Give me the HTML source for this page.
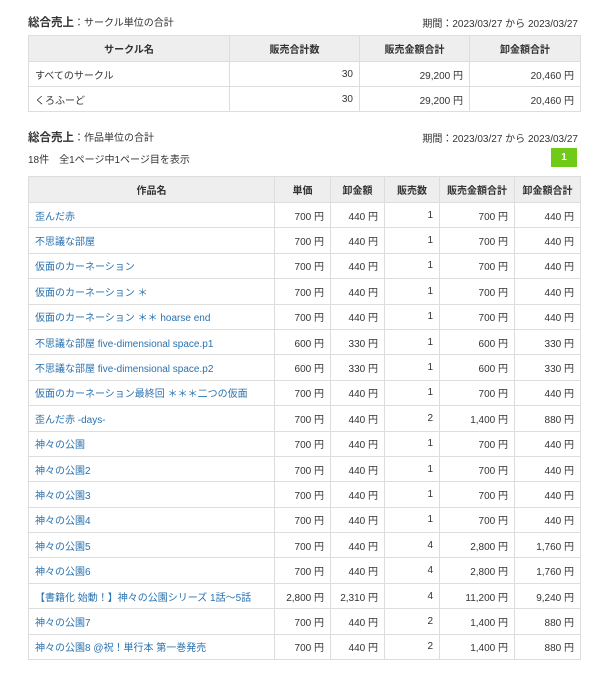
<!DOCTYPE html>
<html><head><meta charset="utf-8"><style>
body{margin:0;background:#fff;font-family:"Liberation Sans","Noto Sans CJK JP",sans-serif;font-size:10px;color:#333;}
.abs{position:absolute}
table{border-collapse:collapse;table-layout:fixed;position:absolute;left:28px;width:552px}
th,td{border:1px solid #ddd;padding:0 6px;white-space:nowrap;overflow:hidden}
th{background:#eee;font-weight:bold;text-align:center;color:#333}
td{text-align:right}
td.l{text-align:left}
a{color:#2a72b0;text-decoration:none}
.t b{font-size:11.5px}
</style></head><body>
<div class="abs t" style="left:28px;top:14px"><b>総合売上</b>：サークル単位の合計</div>
<div class="abs" style="right:26px;top:15px">期間：2023/03/27 から 2023/03/27</div>
<table style="top:35px">
<colgroup><col style="width:201px"><col style="width:130px"><col style="width:110px"><col style="width:111px"></colgroup>
<tr style="height:26px"><th>サークル名</th><th>販売合計数</th><th>販売金額合計</th><th>卸金額合計</th></tr>
<tr style="height:25px"><td class="l">すべてのサークル</td><td>30</td><td>29,200 円</td><td>20,460 円</td></tr>
<tr style="height:25px"><td class="l">くろふーど</td><td>30</td><td>29,200 円</td><td>20,460 円</td></tr>
</table>
<div class="abs t" style="left:28px;top:129px"><b>総合売上</b>：作品単位の合計</div>
<div class="abs" style="right:26px;top:130px">期間：2023/03/27 から 2023/03/27</div>
<div class="abs" style="left:28px;top:151px">18件　全1ページ中1ページ目を表示</div>
<div class="abs" style="left:551px;top:148px;width:26px;height:19px;background:#6fcb17;color:#fff;font-weight:bold;text-align:center;line-height:19px">1</div>
<table style="top:176px">
<colgroup><col style="width:246px"><col style="width:56px"><col style="width:54px"><col style="width:55px"><col style="width:75px"><col style="width:66px"></colgroup>
<tr style="height:26px"><th>作品名</th><th>単価</th><th>卸金額</th><th>販売数</th><th>販売金額合計</th><th>卸金額合計</th></tr>
<tr style="height:25.4px"><td class="l"><a>歪んだ赤</a></td><td>700 円</td><td>440 円</td><td>1</td><td>700 円</td><td>440 円</td></tr>
<tr style="height:25.4px"><td class="l"><a>不思議な部屋</a></td><td>700 円</td><td>440 円</td><td>1</td><td>700 円</td><td>440 円</td></tr>
<tr style="height:25.4px"><td class="l"><a>仮面のカーネーション</a></td><td>700 円</td><td>440 円</td><td>1</td><td>700 円</td><td>440 円</td></tr>
<tr style="height:25.4px"><td class="l"><a>仮面のカーネーション ＊</a></td><td>700 円</td><td>440 円</td><td>1</td><td>700 円</td><td>440 円</td></tr>
<tr style="height:25.4px"><td class="l"><a>仮面のカーネーション ＊＊ hoarse end</a></td><td>700 円</td><td>440 円</td><td>1</td><td>700 円</td><td>440 円</td></tr>
<tr style="height:25.4px"><td class="l"><a>不思議な部屋 five-dimensional space.p1</a></td><td>600 円</td><td>330 円</td><td>1</td><td>600 円</td><td>330 円</td></tr>
<tr style="height:25.4px"><td class="l"><a>不思議な部屋 five-dimensional space.p2</a></td><td>600 円</td><td>330 円</td><td>1</td><td>600 円</td><td>330 円</td></tr>
<tr style="height:25.4px"><td class="l"><a>仮面のカーネーション最終回 ＊＊＊二つの仮面</a></td><td>700 円</td><td>440 円</td><td>1</td><td>700 円</td><td>440 円</td></tr>
<tr style="height:25.4px"><td class="l"><a>歪んだ赤 -days-</a></td><td>700 円</td><td>440 円</td><td>2</td><td>1,400 円</td><td>880 円</td></tr>
<tr style="height:25.4px"><td class="l"><a>神々の公園</a></td><td>700 円</td><td>440 円</td><td>1</td><td>700 円</td><td>440 円</td></tr>
<tr style="height:25.4px"><td class="l"><a>神々の公園2</a></td><td>700 円</td><td>440 円</td><td>1</td><td>700 円</td><td>440 円</td></tr>
<tr style="height:25.4px"><td class="l"><a>神々の公園3</a></td><td>700 円</td><td>440 円</td><td>1</td><td>700 円</td><td>440 円</td></tr>
<tr style="height:25.4px"><td class="l"><a>神々の公園4</a></td><td>700 円</td><td>440 円</td><td>1</td><td>700 円</td><td>440 円</td></tr>
<tr style="height:25.4px"><td class="l"><a>神々の公園5</a></td><td>700 円</td><td>440 円</td><td>4</td><td>2,800 円</td><td>1,760 円</td></tr>
<tr style="height:25.4px"><td class="l"><a>神々の公園6</a></td><td>700 円</td><td>440 円</td><td>4</td><td>2,800 円</td><td>1,760 円</td></tr>
<tr style="height:25.4px"><td class="l"><a>【書籍化 始動！】神々の公園シリーズ 1話～5話</a></td><td>2,800 円</td><td>2,310 円</td><td>4</td><td>11,200 円</td><td>9,240 円</td></tr>
<tr style="height:25.4px"><td class="l"><a>神々の公園7</a></td><td>700 円</td><td>440 円</td><td>2</td><td>1,400 円</td><td>880 円</td></tr>
<tr style="height:25.4px"><td class="l"><a>神々の公園8 @祝！単行本 第一巻発売</a></td><td>700 円</td><td>440 円</td><td>2</td><td>1,400 円</td><td>880 円</td></tr>
</table>
</body></html>
